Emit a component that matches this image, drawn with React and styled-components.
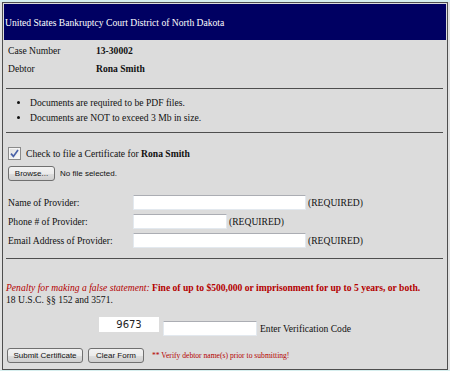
import styled, { createGlobalStyle } from 'styled-components';

const NAVY = '#000062';
const PANEL = '#dcdcdc';
const RULE = '#4e4e4e';
const RED = '#b40000';

const GlobalStyle = createGlobalStyle`
  html, body {
    margin: 0;
    padding: 0;
  }
  body {
    background: linear-gradient(#d6eeee 0 2px, #e2e2e2 2px);
    font-family: "Liberation Serif", "Times New Roman", serif;
    font-size: 9.6px;
    color: #111;
  }
`;

function CheckBox() {
  return (
    <StyledCheck>
      <svg width="9" height="9" viewBox="0 0 9 9">
        <path d="M1 4.6 L3.4 7.4 L8 1" fill="none" stroke="#4a62a8" strokeWidth="1.7" />
      </svg>
    </StyledCheck>
  );
}

export default function App() {
  return (
    <>
      <GlobalStyle />
      <Page>
        <Panel>
          <Header>United States Bankruptcy Court District of North Dakota</Header>

          <InfoGrid>
            <span>Case Number</span>
            <b>13-30002</b>
            <span>Debtor</span>
            <b>Rona Smith</b>
          </InfoGrid>

          <Rule $top={11} />

          <Notes>
            <li>Documents are required to be PDF files.</li>
            <li>Documents are NOT to exceed 3 Mb in size.</li>
          </Notes>

          <Rule $top={7} />

          <CheckRow>
            <CheckBox />
            <span>Check to file a Certificate for <b>Rona Smith</b></span>
          </CheckRow>

          <FileRow>
            <WinButton $w={47}>Browse...</WinButton>
            <SmallSans>No file selected.</SmallSans>
          </FileRow>

          <FormGrid>
            <span>Name of Provider:</span>
            <Field><TextBox $w={173} /><span>(REQUIRED)</span></Field>
            <span>Phone # of Provider:</span>
            <Field><TextBox $w={94} /><span>(REQUIRED)</span></Field>
            <span>Email Address of Provider:</span>
            <Field><TextBox $w={173} /><span>(REQUIRED)</span></Field>
          </FormGrid>

          <Rule $top={10} />

          <Penalty>
            <i>Penalty for making a false statement: </i>
            <b>Fine of up to $500,000 or imprisonment for up to 5 years, or both.</b>
            <br />
            <Plain>18 U.S.C. §§ 152 and 3571.</Plain>
          </Penalty>

          <VerifyRow>
            <CodeBox>9673</CodeBox>
            <TextBox $w={94} />
            <VerifyLabel>Enter Verification Code</VerifyLabel>
          </VerifyRow>

          <ButtonRow>
            <WinButton $w={76}>Submit Certificate</WinButton>
            <WinButton $w={56}>Clear Form</WinButton>
            <Warning>** Verify debtor name(s) prior to submitting!</Warning>
          </ButtonRow>
        </Panel>
      </Page>
    </>
  );
}

const Page = styled.div`
  padding: 2px 2px 0 2px;
`;

const Panel = styled.div`
  box-sizing: border-box;
  width: 446px;
  height: 368px;
  border: 1px solid ${RULE};
  padding: 1px;
  background: ${PANEL};
  display: flex;
  flex-direction: column;
`;

const Header = styled.div`
  height: 36px;
  background: ${NAVY};
  color: #fff;
  display: flex;
  align-items: center;
  padding-left: 1px;
  padding-top: 1px;
  box-sizing: border-box;
`;

const InfoGrid = styled.div`
  display: grid;
  grid-template-columns: 88px auto;
  grid-auto-rows: 18px;
  align-items: center;
  padding: 1px 0 0 4px;
`;

const Rule = styled.div`
  height: 1px;
  margin: ${p => p.$top}px 3px 0 2px;
  background: ${RULE};
  flex-shrink: 0;
`;

const Notes = styled.ul`
  margin: 6px 0 0 0;
  padding: 0 0 0 26px;
  list-style: disc;

  li {
    line-height: 15px;
  }
`;

const CheckRow = styled.div`
  display: flex;
  align-items: center;
  gap: 5px;
  padding: 14px 0 0 4px;
  line-height: 13px;
`;

const StyledCheck = styled.span`
  box-sizing: border-box;
  width: 13px;
  height: 13px;
  border: 1px solid #8a8a8a;
  background: linear-gradient(135deg, #dedede, #fbfbfb);
  box-shadow: inset 0 0 0 1px #f4f4f4;
  display: flex;
  align-items: center;
  justify-content: center;
`;

const FileRow = styled.div`
  display: flex;
  align-items: center;
  gap: 5px;
  padding: 6px 0 0 4px;
`;

const WinButton = styled.button`
  box-sizing: border-box;
  width: ${p => p.$w}px;
  height: 15px;
  padding: 0;
  border: 1px solid #707070;
  border-radius: 3px;
  background: linear-gradient(#f2f2f2 0%, #ebebeb 50%, #dddddd 51%, #cfcfcf 100%);
  font-family: "Liberation Sans", Arial, sans-serif;
  font-size: 8px;
  color: #111;
  line-height: 13px;
`;

const SmallSans = styled.span`
  font-family: "Liberation Sans", Arial, sans-serif;
  font-size: 8px;
`;

const FormGrid = styled.div`
  display: grid;
  grid-template-columns: 125px auto;
  grid-auto-rows: 15px;
  row-gap: 4px;
  align-items: center;
  padding: 14px 0 0 4px;
`;

const Field = styled.div`
  display: flex;
  align-items: center;
  gap: 2px;
`;

const TextBox = styled.input.attrs({ type: 'text' })`
  box-sizing: border-box;
  width: ${p => p.$w}px;
  height: 15px;
  margin: 0;
  padding: 0;
  background: #fff;
  border: 1px solid #e3e9ef;
  border-top-color: #abadb3;
  outline: none;
`;

const Penalty = styled.p`
  margin: 23px 0 0 0;
  padding-left: 2px;
  line-height: 12px;
  color: ${RED};

  i { font-style: italic; }
  b { font-weight: bold; }
`;

const Plain = styled.span`
  color: #111;
`;

const VerifyRow = styled.div`
  display: flex;
  align-items: flex-end;
  height: 19px;
  padding-left: 95px;
  margin-top: 11px;
  gap: 4px;
`;

const CodeBox = styled.div`
  align-self: flex-start;
  width: 60px;
  height: 15px;
  background: #fff;
  font-family: "DejaVu Sans", Verdana, sans-serif;
  font-size: 10px;
  line-height: 15px;
  text-align: center;
  color: #222;
`;

const VerifyLabel = styled.span`
  line-height: 15px;
  margin-left: -1px;
`;

const ButtonRow = styled.div`
  display: flex;
  align-items: center;
  gap: 5px;
  padding-left: 3px;
  margin-top: 12px;
`;

const Warning = styled.span`
  margin-left: 3px;
  color: ${RED};
  font-size: 7.6px;
`;
